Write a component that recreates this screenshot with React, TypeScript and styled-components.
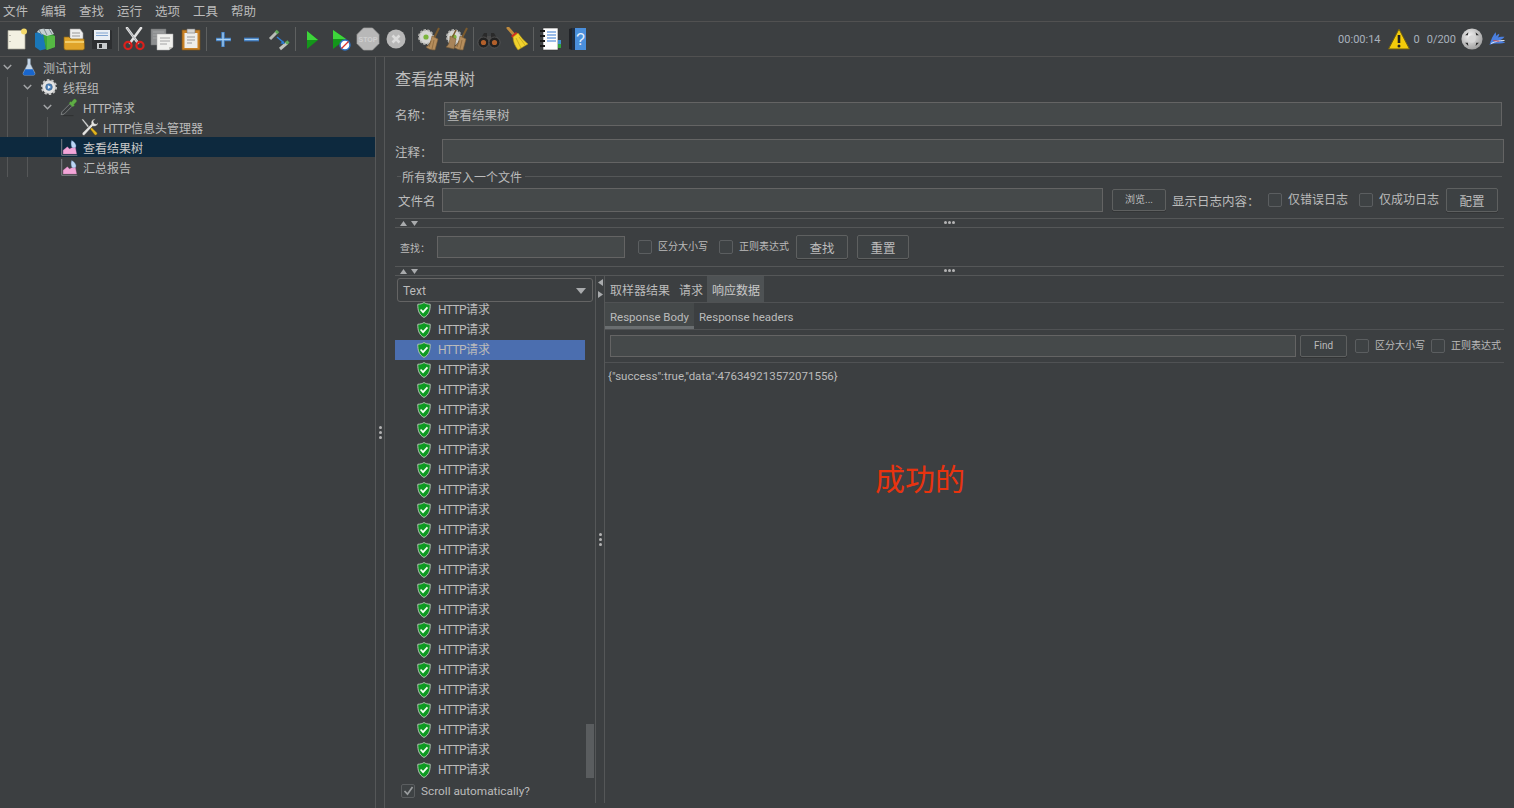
import React from 'react';
import styled, { createGlobalStyle } from 'styled-components';

const FONT = `Roboto, "Noto Sans CJK SC", sans-serif`;

const Global = createGlobalStyle`
  html, body { margin: 0; padding: 0; height: 100%; background: #3c3f41; overflow: hidden; }
  #root { height: 100%; }
  * { box-sizing: border-box; }
`;

const Page = styled.div`
  position: relative;
  width: 1514px;
  height: 808px;
  background: #3c3f41;
  color: #bbbbbb;
  font: 12px/16px ${FONT};
  display: flex;
  flex-direction: column;
  overflow: hidden;
`;

/* ---------- menu ---------- */
const MenuBar = styled.div`
  height: 22px;
  flex: none;
  display: flex;
  padding: 2px 0 0 3px;
  gap: 13px;
  align-items: center;
  border-bottom: 1px solid #515151;
`;
const MenuItem = styled.span`
  width: 25px;
  font-size: 12.5px;
  white-space: nowrap;
`;

/* ---------- toolbar ---------- */
const ToolBar = styled.div`
  height: 35px;
  flex: none;
  display: flex;
  align-items: center;
  padding-left: 3px;
  border-bottom: 1px solid #515151;
`;
const ToolButton = styled.span`
  width: 28.25px;
  height: 28px;
  flex: none;
  display: flex;
  align-items: center;
  justify-content: center;
`;
const ToolSep = styled.span`
  width: 1px;
  height: 24px;
  flex: none;
  margin: 0 1.5px;
  background: #5e6060;
`;
const Status = styled.div`
  margin-left: auto;
  display: flex;
  align-items: center;
  height: 100%;
  padding-right: 8px;
  color: #a9b2bd;
  font-size: 11px;
`;
const StatusText = styled.span<{ $left: number }>`
  margin-left: ${(p) => p.$left}px;
  padding-top: 2px;
  white-space: nowrap;
`;
const StatusIcon = styled.span<{ $left: number }>`
  margin-left: ${(p) => p.$left}px;
  display: flex;
`;

/* ---------- body ---------- */
const Body = styled.div`
  flex: 1;
  min-height: 0;
  display: grid;
  grid-template-columns: 375px 10px 1fr;
`;

const Tree = styled.div`
  overflow: hidden;
`;
const TreeRow = styled.div<{ $selected?: boolean }>`
  height: 20px;
  display: flex;
  align-items: center;
  background: ${(p) => (p.$selected ? '#0d293e' : 'transparent')};
  color: ${(p) => (p.$selected ? '#c8c8c8' : '#bbbbbb')};
  white-space: nowrap;
`;
const Guide = styled.span<{ $on: boolean }>`
  width: 20px;
  height: 100%;
  flex: none;
  position: relative;
  &::before {
    content: '';
    display: ${(p) => (p.$on ? 'block' : 'none')};
    position: absolute;
    left: 7px;
    top: 0;
    bottom: 0;
    width: 1px;
    background: #555758;
  }
`;
const Toggle = styled.span`
  width: 20px;
  flex: none;
  display: flex;
  align-items: center;
  padding-left: 3px;
`;
const TreeIcon = styled.span`
  width: 18px;
  height: 18px;
  flex: none;
  display: flex;
  align-items: center;
  justify-content: center;
`;
const TreeLabel = styled.span`
  margin-left: 5px;
  padding-top: 4px;
  font-size: 12px;
`;
const Latin = styled.span`
  letter-spacing: -0.6px;
`;

const VSplit = styled.div`
  border-left: 1px solid #555758;
  border-right: 1px solid #555758;
  display: flex;
  align-items: center;
  justify-content: center;
  position: relative;
`;
const Dots = styled.span`
  display: flex;
  flex-direction: column;
  gap: 2px;
`;
const Dot = styled.span`
  width: 3px;
  height: 3px;
  background: #b4b4b4;
  border-radius: 50%;
`;

const Right = styled.div`
  padding-left: 10px;
  padding-right: 10px;
  display: flex;
  flex-direction: column;
  min-width: 0;
`;
const Title = styled.div`
  height: 45px;
  flex: none;
  font-size: 16px;
  line-height: 46px;
  color: #bbbbbb;
`;
const FormRow = styled.div<{ $h?: number; $mt?: number }>`
  height: ${(p) => p.$h ?? 24}px;
  margin-top: ${(p) => p.$mt ?? 0}px;
  flex: none;
  display: flex;
  align-items: center;
`;
const Label = styled.label<{ $w: number; $ml?: number; $small?: boolean }>`
  width: ${(p) => p.$w}px;
  margin-left: ${(p) => p.$ml ?? 0}px;
  padding-top: ${(p) => (p.$small ? 3 : 4)}px;
  flex: none;
  font-size: ${(p) => (p.$small ? 10 : 12.5)}px;
  white-space: nowrap;
`;
const Input = styled.div<{ $w?: number; $h?: number; $mr?: number }>`
  ${(p) => (p.$w ? `width:${p.$w}px;flex:none;` : 'flex:1;')}
  height: ${(p) => p.$h ?? 24}px;
  margin-right: ${(p) => p.$mr ?? 0}px;
  background: #45494a;
  border: 1px solid #646464;
  padding: 2px 2px 0;
  font-size: 12.5px;
  line-height: 22px;
  color: #bbbbbb;
  white-space: nowrap;
`;
const Legend = styled.div`
  height: 14px;
  margin: 6px 2px 0 2px;
  flex: none;
  display: flex;
  align-items: center;
  &::before {
    content: '';
    width: 4px;
    height: 1px;
    background: #555758;
    margin-right: 1px;
  }
  &::after {
    content: '';
    flex: 1;
    height: 1px;
    background: #555758;
    margin-left: 3px;
  }
`;
const LegendText = styled.span`
  font-size: 12px;
  padding-top: 4px;
`;
const Button = styled.div<{ $w: number; $h?: number; $ml?: number; $small?: boolean }>`
  width: ${(p) => p.$w}px;
  height: ${(p) => p.$h ?? 24}px;
  margin-left: ${(p) => p.$ml ?? 0}px;
  padding-top: ${(p) => (p.$small ? 0 : 3)}px;
  flex: none;
  border: 1px solid #5e6060;
  border-radius: 2px;
  background: #3d4143;
  box-shadow: 0 1px 0 #333536;
  display: flex;
  align-items: center;
  justify-content: center;
  font-size: ${(p) => (p.$small ? 10 : 12.5)}px;
  color: #bbbbbb;
  white-space: nowrap;
`;
const Check = styled.span<{ $ml?: number }>`
  width: 14px;
  height: 14px;
  flex: none;
  margin-left: ${(p) => p.$ml ?? 0}px;
  border: 1px solid #5b5e60;
  border-radius: 2px;
  background: #3e4244;
  display: flex;
  align-items: center;
  justify-content: center;
`;
const CheckText = styled.span<{ $small?: boolean; $size?: number }>`
  margin-left: 6px;
  font-size: ${(p) => (p.$small ? 10 : p.$size ?? 12)}px;
  flex: none;
  white-space: nowrap;
`;
const HSplit = styled.div<{ $mt?: number }>`
  height: 10px;
  margin-top: ${(p) => p.$mt ?? 0}px;
  flex: none;
  border-top: 1px solid #555758;
  border-bottom: 1px solid #555758;
  display: flex;
  align-items: center;
  position: relative;
  padding-left: 5px;
  gap: 4px;
`;
const HDots = styled.span`
  position: absolute;
  left: 549px;
  top: 2px;
  display: flex;
  gap: 1px;
`;

const Main = styled.div`
  flex: 1;
  min-height: 0;
  display: grid;
  grid-template-columns: 200px 10px 1fr;
  margin-bottom: 5px;
`;
const Results = styled.div`
  display: flex;
  flex-direction: column;
  min-width: 0;
`;
const Combo = styled.div`
  height: 24px;
  margin: 2px 2px 0 2px;
  flex: none;
  border: 1px solid #646464;
  border-radius: 3px;
  display: flex;
  align-items: center;
  justify-content: space-between;
  padding: 1px 6px 0 5px;
  font-size: 12px;
`;
const ListWrap = styled.div`
  flex: none;
  height: 480px;
  margin-top: -2px;
  display: grid;
  grid-template-columns: 190px 10px;
`;
const List = styled.div`
  overflow: hidden;
`;
const ListRow = styled.div<{ $selected?: boolean }>`
  height: 20px;
  display: flex;
  align-items: center;
  padding-left: 22px;
  background: ${(p) => (p.$selected ? '#4b6eaf' : 'transparent')};
  white-space: nowrap;
`;
const ListLabel = styled.span`
  margin-left: 7px;
  font-size: 12px;
`;
const ScrollTrack = styled.div`
  display: flex;
  flex-direction: column;
  justify-content: flex-end;
  padding: 0 1px 2px 1px;
`;
const ScrollThumb = styled.div`
  height: 54px;
  background: #5a5d5f;
`;
const AutoRow = styled.div`
  height: 21px;
  flex: none;
  display: flex;
  align-items: center;
  padding-left: 6px;
  font-size: 12px;
`;
const Arrows = styled.span`
  position: absolute;
  top: 3px;
  left: 0;
  right: 0;
  display: flex;
  flex-direction: column;
  align-items: center;
  gap: 5px;
`;

const Detail = styled.div`
  display: flex;
  flex-direction: column;
  min-width: 0;
`;
const Tabs = styled.div`
  height: 27px;
  flex: none;
  display: flex;
  align-items: stretch;
  border-bottom: 1px solid #505254;
`;
const Tab = styled.div<{ $active?: boolean }>`
  padding: 4px 4px 0 5px;
  display: flex;
  align-items: center;
  font-size: 12px;
  background: ${(p) => (p.$active ? '#4e5254' : 'transparent')};
  color: ${(p) => (p.$active ? '#c8c8c8' : '#bbbbbb')};
  white-space: nowrap;
`;
const SubTabs = styled.div`
  height: 27px;
  flex: none;
  display: flex;
  align-items: stretch;
  border-bottom: 1px solid #505254;
`;
const SubTab = styled.div<{ $active?: boolean }>`
  padding: 4px 5px 0 5px;
  display: flex;
  align-items: center;
  font-size: 11.5px;
  background: ${(p) => (p.$active ? '#45494a' : 'transparent')};
  border-bottom: 3px solid ${(p) => (p.$active ? '#6a6e70' : 'transparent')};
  white-space: nowrap;
`;
const SearchRow = styled.div`
  height: 33px;
  flex: none;
  display: flex;
  align-items: center;
  padding-left: 5px;
  border-bottom: 1px solid #505254;
`;
const Response = styled.div`
  padding: 5px 3px;
  font-size: 11.5px;
  line-height: 16px;
  white-space: nowrap;
`;
const Annotation = styled.div`
  position: absolute;
  left: 875px;
  top: 460px;
  font-size: 30px;
  line-height: 40px;
  color: #e8330f;
  white-space: nowrap;
`;

/* ---------- icons ---------- */
const S = ({ size = 24, vb = 24, children }: { size?: number; vb?: number; children: React.ReactNode }) => (
  <svg width={size} height={size} viewBox={`0 0 ${vb} ${vb}`} fill="none">{children}</svg>
);

const NewFile = () => (
  <S>
    <path d="M3 3.500h15.500l1.500 2V22H3z" fill="#f3f1e2" stroke="#a9a89a" strokeWidth=".7" />
    <circle cx="19" cy="4.500" r="3" fill="#f4d96a" />
    <path d="M5 8v1M5 14v1" stroke="#8a8a80" />
  </S>
);
const Books = () => (
  <S>
    <path d="M2 6l8-2 3 18-6 1.500L2 20z" fill="#1a77b8" />
    <path d="M10 6l6-1 6 4v11l-9 3z" fill="#3aa53a" />
    <path d="M14 9l8 0v11l-8 3z" fill="#55b843" />
    <path d="M4 5c1-3 6-4 8-3l6 0 3 5-7 2-5-2z" fill="#c8d1d3" />
    <path d="M6 3l3 5M11 2l3 6M16 2l3 5" stroke="#7e8a8d" />
  </S>
);
const FolderOpen = () => (
  <S>
    <path d="M8 2h10l3 4v8H8z" fill="#eee" stroke="#999" strokeWidth=".6" />
    <path d="M10 6h8M10 9h8" stroke="#999" />
    <path d="M2 10h5l2 2h13l.5 9a2 2 0 0 1-2 2H4a2 2 0 0 1-2-2z" fill="#e0a42a" stroke="#8a6414" strokeWidth=".7" />
    <path d="M3 15h19" stroke="#f2cd6a" strokeWidth="2" />
  </S>
);
const Floppy = () => (
  <S>
    <path d="M2 3h19l1 1v18H2z" fill="#2d2f31" />
    <path d="M4 3h16v10H4z" fill="#e9eef4" />
    <path d="M6 6h12M6 8.500h12" stroke="#7ea2cf" />
    <path d="M7 16h10v6H7z" fill="#c8cbcd" />
    <path d="M9 17h3v4H9z" fill="#2d2f31" />
  </S>
);
const Scissors = () => (
  <S>
    <path d="M5 1l11 15M19 1L8 16" stroke="#e2e2e2" strokeWidth="2.600" strokeLinecap="round" />
    <path d="M5 1l11 15" stroke="#9aa0a4" strokeWidth=".8" />
    <circle cx="6" cy="18.500" r="3.600" stroke="#d9201c" strokeWidth="2.200" />
    <circle cx="18" cy="18.500" r="3.600" stroke="#d9201c" strokeWidth="2.200" />
  </S>
);
const Copy = () => (
  <S>
    <path d="M1 2h15v16H1z" fill="#8d8f90" stroke="#6a6c6d" strokeWidth=".5" />
    <path d="M3 5h11M3 8h11M3 11h11" stroke="#a5a7a8" />
    <path d="M7 7h16v13l-4 3H7z" fill="#f1f1ee" stroke="#aaa" strokeWidth=".5" />
    <path d="M10 11h10M10 14h10M10 17h7" stroke="#a4a4a4" />
    <path d="M19 23v-3h4z" fill="#c5c5c0" />
  </S>
);
const Paste = () => (
  <S>
    <path d="M3 3h18v20H3z" fill="#c98225" stroke="#77501a" strokeWidth=".7" />
    <path d="M5.500 6h13v15h-13z" fill="#eeeeea" />
    <path d="M8 2h8v4H8z" fill="#d7d7d4" stroke="#77777a" strokeWidth=".6" />
    <path d="M8 10h8M8 13h8M8 16h5" stroke="#9a9a9a" />
  </S>
);
const Plus = () => (
  <S>
    <path d="M12 5v15M5 12.500h15" stroke="#3c79bd" strokeWidth="3.600" />
    <path d="M12 5.500v14M5.500 12.500h14" stroke="#a9d1f3" strokeWidth="1.300" />
  </S>
);
const Minus = () => (
  <S>
    <path d="M5 12.500h15" stroke="#3c79bd" strokeWidth="3.800" />
    <path d="M5.500 12.500h14" stroke="#a9d1f3" strokeWidth="1.300" />
  </S>
);
const PipetteToggle = () => (
  <S>
    <path d="M3 12l7-7" stroke="#b9bcb7" strokeWidth="3" />
    <path d="M9 6l2-2" stroke="#5ea859" strokeWidth="3.500" />
    <path d="M13 22l7-6" stroke="#bfc2bd" strokeWidth="3" />
    <path d="M19 16.500l2.500-2" stroke="#5ea859" strokeWidth="3.500" />
    <path d="M10 10l6 5" stroke="#2d7ed8" strokeWidth="1.500" />
    <path d="M18 17l-4.500-.5 2.500-3z" fill="#2d7ed8" />
  </S>
);
const Play = () => (
  <S>
    <path d="M7 4l11 9-11 9z" fill="#14961a" />
    <path d="M7 4l11 9H7z" fill="#3ed43b" />
  </S>
);
const PlayNoPause = () => (
  <S>
    <path d="M5 3l13 9-13 10z" fill="#14961a" />
    <path d="M5 3l13 9H5z" fill="#3ed43b" />
    <circle cx="17" cy="18" r="5" fill="#fff" stroke="#2e72c5" strokeWidth="1.400" />
    <path d="M13.500 21.500l7-7" stroke="#d8352c" strokeWidth="1.300" />
  </S>
);
const Stop = () => (
  <S>
    <path d="M7.500 1h9L23 7.500v9L16.500 23h-9L1 16.500v-9z" fill="#b8b8b8" stroke="#a2a2a2" strokeWidth=".7" />
    <text x="12" y="15" textAnchor="middle" fontSize="7" fontWeight="700" fontFamily="Liberation Sans, sans-serif" fill="#d0d0d0">STOP</text>
  </S>
);
const Shutdown = () => (
  <S>
    <circle cx="12" cy="12" r="9.500" fill="#b8b8b8" />
    <path d="M8.500 8.500l7 7M15.500 8.500l-7 7" stroke="#dcdcdc" strokeWidth="2.600" />
  </S>
);
const BroomGear = ({ double }: { double?: boolean }) => (
  <S>
    <circle cx="9" cy="10" r="7" fill="#d7d7d4" stroke="#b3b3b0" strokeWidth="2" strokeDasharray="2.400 1.400" />
    <circle cx="9" cy="10" r="2.600" fill="#7cb53d" />
    <path d="M22 1l-5 10" stroke="#7b5a2d" strokeWidth="2" />
    <path d="M15 9l6 3-3 11c-4 0-7-1-9-3 4-2 5-6 6-11z" fill="#b58d5c" stroke="#7b5d35" strokeWidth=".6" />
    <path d="M14 14l-2 6M17 13l-2 9" stroke="#826136" strokeWidth=".7" />
    {double && (
      <>
        <path d="M11 3l-4 8" stroke="#7b5a2d" strokeWidth="1.600" />
        <path d="M5 9l6 3-2 10-8-2c3-2 4-6 4-11z" fill="#a8845a" stroke="#7b5d35" strokeWidth=".6" />
      </>
    )}
  </S>
);
const Binoculars = () => (
  <S>
    <path d="M3 13l4-7h3v7zM21 13l-4-7h-3v7z" fill="#2a2a2a" />
    <path d="M10 9h4v5h-4z" fill="#4a4a4a" />
    <circle cx="6.500" cy="15.500" r="5.500" fill="#222" stroke="#6a6a6a" strokeWidth=".6" />
    <circle cx="17.500" cy="15.500" r="5.500" fill="#222" stroke="#6a6a6a" strokeWidth=".6" />
    <circle cx="6.500" cy="15.500" r="2.600" fill="#b3602b" />
    <circle cx="17.500" cy="15.500" r="2.600" fill="#b3602b" />
  </S>
);
const Broom = () => (
  <S>
    <path d="M3 1l7 8" stroke="#bd8a3e" strokeWidth="3" strokeLinecap="round" />
    <path d="M6 9l5-4 2 2-5 4z" fill="#d32b1f" />
    <path d="M8 10l5-4c3 4 6 8 10 11l-10 6c-3-4-5-8-5-13z" fill="#f1d22c" stroke="#a88f18" strokeWidth=".6" />
    <path d="M11 11l5 10M14 10l6 8" stroke="#b89d1c" strokeWidth=".7" />
  </S>
);
const LogBook = () => (
  <S>
    <path d="M5 1h15v22H5z" fill="#fdfdfd" stroke="#333" strokeWidth=".6" />
    <path d="M9 5h9M9 8h9M9 11h9M9 14h9" stroke="#3479d1" strokeWidth="1.200" />
    <path d="M2 4h5M2 9h5M2 14h5M2 19h5" stroke="#1b1b1b" strokeWidth="1.800" />
    <path d="M20 13h3v4h-3z" fill="#3f8fd0" />
    <path d="M20 17h3v4h-3z" fill="#33a33c" />
  </S>
);
const HelpBook = () => (
  <S>
    <path d="M3 2l3-1v22l-3-1z" fill="#202226" />
    <path d="M6 1h14v22H6z" fill="#4a8fdc" />
    <path d="M6 1h3v22H6z" fill="#1f2f44" />
    <text x="14.500" y="18" textAnchor="middle" fontSize="16" fontFamily="Liberation Sans, sans-serif" fill="#e2eefa">?</text>
  </S>
);
const Warning = () => (
  <S size={24}>
    <path d="M12 2L1.500 22h21z" fill="#f4cc0a" stroke="#6f5f12" strokeWidth="1" />
    <path d="M12 8v8" stroke="#222" strokeWidth="2.600" />
    <circle cx="12" cy="19" r="1.500" fill="#222" />
  </S>
);
const Remote = () => (
  <S size={22}>
    <defs>
      <radialGradient id="rm" cx=".4" cy=".35" r=".8">
        <stop offset="0" stopColor="#f2f2f2" />
        <stop offset="1" stopColor="#8f8f8f" />
      </radialGradient>
    </defs>
    <circle cx="12" cy="12" r="11.500" fill="url(#rm)" />
    <path d="M8 4.500l-3.500 3.500h3zM16 4.500l3.500 3.500h-3zM8 19.500l-3.500-3.500h3zM16 19.500l3.500-3.500h-3z" fill="#2f2f2f" />
    <circle cx="12" cy="12" r="4" fill="#d6d6d6" />
  </S>
);
const Feather = () => (
  <S size={18}>
    <path d="M2 20C4 12 7 7 10 3c1 2 1 4 0 6 1-2 3-3 5-4 0 2-1 4-2 5 3-1 6-1 9-1-2 3-5 4-8 5 3 0 6 1 9 3-5 1-10 1-14 1-3 0-5 1-7 2z" fill="#4a7fe0" />
    <path d="M4 18c6-3 11-4 18-4" stroke="#e3e9f5" strokeWidth="1.300" />
    <path d="M7 14l8 1" stroke="#d6473f" strokeWidth="1.200" />
  </S>
);

const Chevron = () => (
  <svg width="9" height="6" viewBox="0 0 9 6" fill="none">
    <path d="M.8 1l3.700 3.700L8.200 1" stroke="#a4a6a8" strokeWidth="1.500" />
  </svg>
);
const Flask = () => (
  <S size={20}>
    <path d="M10 1h4v7l6 12c.6 1.500-.5 3-2 3H6c-1.500 0-2.600-1.500-2-3l6-12z" fill="#c5d5e6" stroke="#7a8a99" strokeWidth=".6" />
    <path d="M7 15h10l3 6c0 1-1 2-2 2H6c-1 0-2-1-2-2z" fill="#1966cc" />
  </S>
);
const Gear = () => (
  <S size={22}>
    <circle cx="12" cy="12" r="9" fill="#dcdcdc" stroke="#c5c5c5" strokeWidth="3.500" strokeDasharray="3 2.650" />
    <circle cx="12" cy="12" r="8" fill="#e4e4e4" />
    <circle cx="12" cy="12" r="4.500" fill="#4b7fb8" stroke="#30506f" strokeWidth=".6" />
    <path d="M10.500 9.500l4 2.500-4 2.500z" fill="#eaf2fa" />
  </S>
);
const Pipette = () => (
  <S size={20}>
    <path d="M1.500 22l1-3.500L13 8l3 3L5.500 21.500z" fill="#3a3d3f" stroke="#a5a8a8" strokeWidth=".8" />
    <path d="M12 7l5 5 2.500-2.500-1-1 3.500-3.500c1.200-2-1.500-4.500-3.500-3.500L15 5.500l-1-1z" fill="#5fae45" stroke="#3d7a2c" strokeWidth=".5" />
    <path d="M4 23.500h14" stroke="#2b2d2e" strokeWidth="1" />
  </S>
);
const Tools = () => (
  <S size={20}>
    <path d="M2 2l2-1 10 12-2 2z" fill="#cfd2d2" stroke="#333" strokeWidth=".7" />
    <path d="M13 14l2-2 8 8c0 2-1 3-3 3z" fill="#e2b41e" stroke="#5a4810" strokeWidth=".6" />
    <path d="M3 20L15 8c-1-3 1-7 6-7l-3 3 1 3 3 1 2-3c1 5-3 7-7 6L6 23c-2 1-4-1-3-3z" fill="#e4e4e2" stroke="#2c2c2c" strokeWidth=".8" />
  </S>
);
const Chart = () => (
  <S size={17}>
    <path d="M1 0v23h22" stroke="#8b8e91" strokeWidth="1.200" />
    <path d="M3 21v-5l6-5 3 3 8-4 2 11z" fill="#f2a6d8" stroke="#c873ae" strokeWidth=".5" />
    <path d="M15 2c4 2 7 6 6 9-1 2-5 2-6 0-1-3-1-6 0-9z" fill="#bcd6f4" stroke="#5d83b3" strokeWidth=".5" />
  </S>
);
const Shield = () => (
  <svg width="14" height="16" viewBox="0 0 13 15" fill="none">
    <path d="M6.500.5c1.500 1.100 3.500 1.600 5.800 1.600.2 5.200-1 10-5.800 12.400C1.700 12.100.5 7.300.7 2.100 3 2.100 5 1.600 6.500.5z" fill="#0e9a22" stroke="#b8c2b8" strokeWidth=".9" />
    <path d="M3.300 7l2.300 2.500 4.100-4.400" stroke="#f4fff4" strokeWidth="1.600" />
  </svg>
);
const TriUp = () => (
  <svg width="7" height="5" viewBox="0 0 7 5"><path d="M3.500 0L7 5H0z" fill="#a9abad" /></svg>
);
const TriDown = () => (
  <svg width="7" height="5" viewBox="0 0 7 5"><path d="M0 0h7L3.500 5z" fill="#a9abad" /></svg>
);
const TriLeft = () => (
  <svg width="5" height="7" viewBox="0 0 5 7"><path d="M5 0v7L0 3.500z" fill="#a9abad" /></svg>
);
const TriRight = () => (
  <svg width="5" height="7" viewBox="0 0 5 7"><path d="M0 0v7l5-3.500z" fill="#a9abad" /></svg>
);
const ComboArrow = () => (
  <svg width="10" height="6" viewBox="0 0 10 6"><path d="M0 0h10L5 6z" fill="#a9abad" /></svg>
);
const Tick = () => (
  <svg width="11" height="10" viewBox="0 0 11 10" fill="none"><path d="M1.500 5l3 3.200L9.500 1" stroke="#9a9d9f" strokeWidth="1.700" /></svg>
);

/* ---------- data ---------- */
const menus = ['文件', '编辑', '查找', '运行', '选项', '工具', '帮助'];
const toolGroups: React.ReactNode[][] = [
  [<NewFile />, <Books />, <FolderOpen />, <Floppy />],
  [<Scissors />, <Copy />, <Paste />],
  [<Plus />, <Minus />, <PipetteToggle />],
  [<Play />, <PlayNoPause />, <Stop />, <Shutdown />],
  [<BroomGear />, <BroomGear double />],
  [<Binoculars />, <Broom />],
  [<LogBook />, <HelpBook />],
];
const treeRows: { label: React.ReactNode; key: string; icon: React.ReactNode; guides: boolean[]; open: boolean; selected?: boolean }[] = [
  { key: 'plan', label: '测试计划', icon: <Flask />, guides: [], open: true },
  { key: 'group', label: '线程组', icon: <Gear />, guides: [true], open: true },
  { key: 'http', label: <><Latin>HTTP</Latin>请求</>, icon: <Pipette />, guides: [true, true], open: true },
  { key: 'hdr', label: <><Latin>HTTP</Latin>信息头管理器</>, icon: <Tools />, guides: [true, true, true], open: false },
  { key: 'tree', label: '查看结果树', icon: <Chart />, guides: [true, true], open: false, selected: true },
  { key: 'sum', label: '汇总报告', icon: <Chart />, guides: [true, true], open: false },
];
const results = Array.from({ length: 24 }, (_, i) => i);

const SplitHandle = ({ mt }: { mt?: number }) => (
  <HSplit $mt={mt}>
    <TriUp />
    <TriDown />
    <HDots><Dot /><Dot /><Dot /></HDots>
  </HSplit>
);
const VDots = () => (
  <Dots><Dot /><Dot /><Dot /></Dots>
);

export default function App() {
  return (
    <Page>
      <Global />
      <MenuBar>
        {menus.map((m) => <MenuItem key={m}>{m}</MenuItem>)}
      </MenuBar>
      <ToolBar>
        {toolGroups.map((group, g) => (
          <React.Fragment key={g}>
            {g > 0 && <ToolSep />}
            {group.map((icon, i) => <ToolButton key={i}>{icon}</ToolButton>)}
          </React.Fragment>
        ))}
        <Status>
          <StatusText $left={0}>00:00:14</StatusText>
          <StatusIcon $left={6}><Warning /></StatusIcon>
          <StatusText $left={3}>0</StatusText>
          <StatusText $left={7}>0/200</StatusText>
          <StatusIcon $left={5}><Remote /></StatusIcon>
          <StatusIcon $left={5}><Feather /></StatusIcon>
        </Status>
      </ToolBar>
      <Body>
        <Tree>
          {treeRows.map((r) => (
            <TreeRow key={r.key} $selected={r.selected}>
              {r.guides.map((on, i) => <Guide key={i} $on={on && !r.selected} />)}
              <Toggle>{r.open && <Chevron />}</Toggle>
              <TreeIcon>{r.icon}</TreeIcon>
              <TreeLabel>{r.label}</TreeLabel>
            </TreeRow>
          ))}
        </Tree>
        <VSplit><VDots /></VSplit>
        <Right>
          <Title>查看结果树</Title>
          <FormRow>
            <Label $w={49}>名称：</Label>
            <Input $mr={2}>查看结果树</Input>
          </FormRow>
          <FormRow $mt={13}>
            <Label $w={47}>注释：</Label>
            <Input />
          </FormRow>
          <Legend><LegendText>所有数据写入一个文件</LegendText></Legend>
          <FormRow $mt={5}>
            <Label $w={44} $ml={3}>文件名</Label>
            <Input $w={661} />
            <Button $w={54} $h={22} $ml={9} $small>浏览...</Button>
            <Label $w={96} $ml={6}>显示日志内容：</Label>
            <Check />
            <CheckText>仅错误日志</CheckText>
            <Check $ml={11} />
            <CheckText>仅成功日志</CheckText>
            <Button $w={52} $ml={7}>配置</Button>
          </FormRow>
          <SplitHandle mt={6} />
          <FormRow $h={38}>
            <Label $w={37} $ml={5} $small>查找：</Label>
            <Input $w={188} $h={22} />
            <Check $ml={13} />
            <CheckText $small>区分大小写</CheckText>
            <Check $ml={11} />
            <CheckText $small>正则表达式</CheckText>
            <Button $w={52} $ml={7}>查找</Button>
            <Button $w={52} $ml={9}>重置</Button>
          </FormRow>
          <SplitHandle />
          <Main>
            <Results>
              <Combo>Text<ComboArrow /></Combo>
              <ListWrap>
                <List>
                  {results.map((i) => (
                    <ListRow key={i} $selected={i === 2}>
                      <Shield />
                      <ListLabel><Latin>HTTP</Latin>请求</ListLabel>
                    </ListRow>
                  ))}
                </List>
                <ScrollTrack><ScrollThumb /></ScrollTrack>
              </ListWrap>
              <AutoRow>
                <Check><Tick /></Check>
                <CheckText $size={11.8}>Scroll automatically?</CheckText>
              </AutoRow>
            </Results>
            <VSplit>
              <Arrows><TriLeft /><TriRight /></Arrows>
              <VDots />
            </VSplit>
            <Detail>
              <Tabs>
                <Tab>取样器结果</Tab>
                <Tab>请求</Tab>
                <Tab $active>响应数据</Tab>
              </Tabs>
              <SubTabs>
                <SubTab $active>Response Body</SubTab>
                <SubTab>Response headers</SubTab>
              </SubTabs>
              <SearchRow>
                <Input $w={686} $h={22} />
                <Button $w={47} $h={22} $ml={4} $small>Find</Button>
                <Check $ml={8} />
                <CheckText $small>区分大小写</CheckText>
                <Check $ml={6} />
                <CheckText $small>正则表达式</CheckText>
              </SearchRow>
              <Response>{'{"success":true,"data":476349213572071556}'}</Response>
            </Detail>
          </Main>
        </Right>
      </Body>
      <Annotation>成功的</Annotation>
    </Page>
  );
}
